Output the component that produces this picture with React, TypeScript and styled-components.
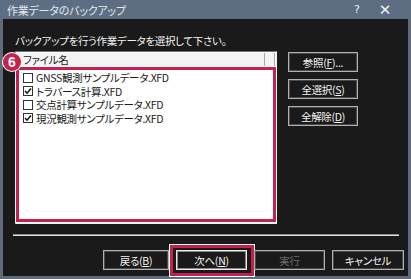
import React from "react";
import styled, { createGlobalStyle } from "styled-components";

const Global = createGlobalStyle`
  html, body { margin: 0; padding: 0; background: #1a1a1a; }
  body { font-family: "Noto Sans CJK JP", "Noto Sans", sans-serif; font-feature-settings: "palt"; }
  * { box-sizing: border-box; }
`;

const RED = "#c4214d";

const Dialog = styled.div`
  width: 411px;
  height: 279px;
  display: flex;
  flex-direction: column;
  background: #5d6b7b;
  padding: 0 3px 3px 3px;
`;

const TitleBar = styled.div`
  height: 19px;
  margin: 0 -3px;
  display: flex;
  align-items: center;
  padding-left: 7px;
  color: #e4e8ee;
  font-size: 11px;
  background: #5e6e82;
`;

const TitleText = styled.span`
  flex: 1;
  letter-spacing: -0.2px;
`;

const TitleIcon = styled.span<{ $w: number }>`
  width: ${(p) => p.$w}px;
  text-align: center;
  font-size: ${(p) => (p.$w > 30 ? 15 : 11)}px;
  font-family: "DejaVu Sans", sans-serif;
  color: #eef1f5;
`;

const Body = styled.div`
  flex: 1;
  background: #1a1a1a;
  padding: 0 4px 0 12px;
  color: #f2f2f2;
  font-size: 10.5px;
`;

const Instruction = styled.div`
  margin-top: 15px;
  height: 14px;
  line-height: 14px;
  letter-spacing: -0.3px;
`;

const MainRow = styled.div`
  margin-top: 3px;
  display: flex;
  gap: 11px;
`;

const ListBox = styled.div`
  position: relative;
  width: 262px;
  height: 173px;
  background: #fff;
  border-top: 1px solid #6e6e6e;
  border-left: 1px solid #6e6e6e;
  border-right: 1px solid #f0f0f0;
  border-bottom: 1px solid #f0f0f0;
  padding: 1px 1px 0 1px;
`;

const Header = styled.div`
  display: flex;
  height: 14px;
  background: #f3f3f3;
  border-bottom: 1px solid #d6d6d6;
  color: #1a1a1a;
`;

const HeaderCell = styled.div<{ $w?: number }>`
  ${(p) => (p.$w ? `width: ${p.$w}px;` : "flex: 1;")}
  border-right: 1px solid #a8a8a8;
  padding-left: 6px;
  line-height: 13px;
  font-size: 10.5px;
  letter-spacing: -0.3px;
`;

const Rows = styled.div`
  padding-top: 4px;
`;

const Row = styled.div`
  height: 13.5px;
  display: flex;
  align-items: center;
  padding-left: 6px;
  color: #1a1a1a;
  gap: 3px;
  letter-spacing: -0.3px;
`;

const Box = styled.span`
  width: 10px;
  height: 10px;
  border: 1px solid #333;
  background: #fff;
  display: inline-flex;
  align-items: center;
  justify-content: center;
  flex: none;
`;

const RedFrame = styled.div`
  position: absolute;
  left: 0px;
  right: 0px;
  top: 15px;
  bottom: 1px;
  border: 3px solid ${RED};
  box-shadow: 0 0 0 1px #fff;
  pointer-events: none;
`;

const Badge = styled.div`
  position: absolute;
  left: -13px;
  top: 1px;
  width: 18px;
  height: 18px;
  border-radius: 50%;
  background: ${RED};
  box-shadow: 0 0 0 1px #fff;
  color: #fff;
  font-family: "Liberation Sans", sans-serif;
  font-weight: bold;
  font-size: 14px;
  line-height: 18px;
  text-align: center;
`;

const SideCol = styled.div`
  margin-top: 1px;
  display: flex;
  flex-direction: column;
  gap: 7px;
`;

const Button = styled.div<{ $w?: number; $disabled?: boolean; $default?: boolean }>`
  position: relative;
  width: ${(p) => p.$w ?? 70}px;
  height: 20px;
  border: 1px solid ${(p) => (p.$default ? "#e8e8e8" : "#b0b0b0")};
  box-shadow: inset 0 0 0 1px ${(p) => (p.$default ? "#8a8a8a" : "#4a4a4a")};
  background: #1a1a1a;
  color: ${(p) => (p.$disabled ? "#6a6a6a" : "#f4f4f4")};
  display: flex;
  align-items: center;
  justify-content: center;
  font-size: 10.5px;
  letter-spacing: -0.3px;
  flex: none;
`;

const Key = styled.u`
  text-underline-offset: 1px;
`;

const Separator = styled.div`
  margin: 10px 0 0 -2px;
  width: 386px;
  height: 2px;
  border-top: 1px solid #8c8c8c;
  border-bottom: 1px solid #e0e0e0;
`;

const Footer = styled.div`
  margin-top: 14px;
  display: flex;
  justify-content: flex-end;
  gap: 7px;
`;

const Highlight = styled.div`
  position: absolute;
  left: -7px;
  right: -8px;
  top: -6px;
  bottom: -7px;
  border: 3px solid ${RED};
  box-shadow: 0 0 0 1px #fff;
  pointer-events: none;
`;

const Check = () => (
  <svg width="8" height="8" viewBox="0 0 8 8">
    <polyline points="1,4 3,6.2 7,1.5" fill="none" stroke="#111" strokeWidth="1.5" />
  </svg>
);

const files = [
  { name: "GNSS観測サンプルデータ.XFD", checked: false },
  { name: "トラバース計算.XFD", checked: true },
  { name: "交点計算サンプルデータ.XFD", checked: false },
  { name: "現況観測サンプルデータ.XFD", checked: true },
];

export default function App() {
  return (
    <>
      <Global />
      <Dialog>
        <TitleBar>
          <TitleText>作業データのバックアップ</TitleText>
          <TitleIcon $w={20}>?</TitleIcon>
          <TitleIcon $w={36}>✕</TitleIcon>
          <span style={{ width: 8 }} />
        </TitleBar>
        <Body>
          <Instruction>バックアップを行う作業データを選択して下さい。</Instruction>
          <MainRow>
            <ListBox>
              <Header>
                <HeaderCell $w={248}>ファイル名</HeaderCell>
                <HeaderCell />
              </Header>
              <Rows>
                {files.map((f) => (
                  <Row key={f.name}>
                    <Box>{f.checked && <Check />}</Box>
                    {f.name}
                  </Row>
                ))}
              </Rows>
              <RedFrame />
              <Badge>6</Badge>
            </ListBox>
            <SideCol>
              <Button>
                参照(<Key>F</Key>)...
              </Button>
              <Button>
                全選択(<Key>S</Key>)
              </Button>
              <Button>
                全解除(<Key>D</Key>)
              </Button>
            </SideCol>
          </MainRow>
          <Separator />
          <Footer>
            <Button $w={66}>
              戻る(<Key>B</Key>)
            </Button>
            <Button $w={71} $default>
              次へ(<Key>N</Key>)
              <Highlight />
            </Button>
            <Button $w={71} $disabled>
              実行
            </Button>
            <Button $w={72}>キャンセル</Button>
          </Footer>
        </Body>
      </Dialog>
    </>
  );
}
